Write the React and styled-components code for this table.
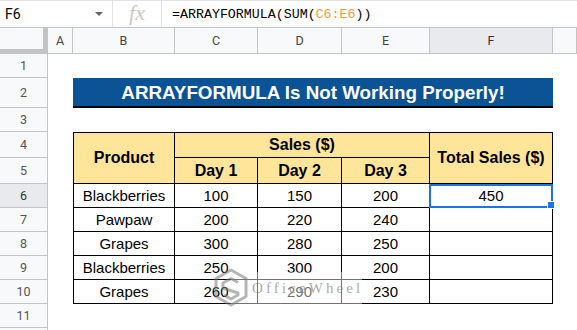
import React from 'react';
import styled, { createGlobalStyle } from 'styled-components';

const Global = createGlobalStyle`
  html, body { margin: 0; padding: 0; background: #fff; }
  body { width: 577px; height: 330px; overflow: hidden; font-family: "Liberation Sans", Arial, sans-serif; }
  * { box-sizing: border-box; }
`;

const Page = styled.div`
  width: 577px;
  height: 330px;
  display: flex;
  flex-direction: column;
  overflow: hidden;
  position: relative;
  background: #fff;
`;

const FormulaBar = styled.div`
  height: 28px;
  flex: none;
  display: flex;
  align-items: stretch;
  border-top: 1px solid #e3e3e3;
  border-bottom: 1px solid #c7c7c7;
  background: #fff;
`;

const NameBox = styled.div`
  width: 113px;
  display: flex;
  align-items: center;
  justify-content: space-between;
  padding: 0 9px 0 5px;
  font: 14px Roboto, "Liberation Sans", sans-serif;
  color: #000;
  border-right: 1px solid #e3e3e3;
`;

const Caret = styled.span`
  width: 0;
  height: 0;
  border-left: 4px solid transparent;
  border-right: 4px solid transparent;
  border-top: 4px solid #5f6368;
`;

const FxBox = styled.div`
  width: 49px;
  display: flex;
  align-items: center;
  justify-content: center;
  border-right: 1px solid #e3e3e3;
  font: italic 22px "Liberation Serif", serif;
  color: #c8c8c8;
  padding-bottom: 3px;
`;

const FormulaText = styled.div`
  padding-left: 10px;
  display: flex;
  align-items: center;
  font: 13.3px "Liberation Mono", monospace;
  color: #000;
  white-space: pre;
`;

const Ref = styled.span`
  color: #f29d38;
`;

const Sheet = styled.div`
  display: grid;
  grid-template-columns: 48px 25px 102px 83px 84px 88px 123px 1fr;
  grid-template-rows: 26px 24px 30px 24px 26px 26px repeat(6, 24px) 1fr;
  flex: 1;
`;

const Corner = styled.div`
  background: #f8f9fa;
  border-right: 5px solid #c4c4c4;
  border-bottom: 5px solid #c4c4c4;
`;

const ColHead = styled.div`
  background: ${p => (p.$active ? '#e8eaed' : '#f8f9fa')};
  border-right: 1px solid #c4c4c4;
  border-bottom: 1px solid #c4c4c4;
  display: flex;
  align-items: center;
  justify-content: center;
  font: 12.5px Roboto, "Liberation Sans", sans-serif;
  color: ${p => (p.$active ? '#333' : '#444')};
`;

const RowHead = styled.div`
  grid-column: 1;
  grid-row: ${p => p.$row + 1};
  background: ${p => (p.$active ? '#e8eaed' : '#f8f9fa')};
  border-right: 1px solid #c4c4c4;
  border-bottom: ${p => (p.$last ? 'none' : '1px solid #c4c4c4')};
  display: flex;
  align-items: center;
  justify-content: center;
  font: 12.5px Roboto, "Liberation Sans", sans-serif;
  color: ${p => (p.$active ? '#333' : '#555')};
`;

const Title = styled.div`
  grid-column: 3 / 8;
  grid-row: 3;
  background: #0b5394;
  border-bottom: 2px solid #000;
  color: #fff;
  font: bold 18.8px "Liberation Sans", Arial, sans-serif;
  display: flex;
  align-items: center;
  justify-content: center;
  padding-top: 1px;
`;

const Table = styled.div`
  grid-column: 3 / 8;
  grid-row: 5 / 12;
  display: grid;
  grid-template-columns: 101px 83px 84px 88px 123px;
  grid-template-rows: 25px 26px repeat(5, 24px);
  border-top: 1px solid #000;
  border-left: 1px solid #000;
`;

const Cell = styled.div`
  position: relative;
  border-right: 1px solid #000;
  border-bottom: 1px solid #000;
  display: flex;
  align-items: center;
  justify-content: center;
  color: #000;
  font: 15px "Liberation Sans", Arial, sans-serif;
  background: #fff;
`;

const HeadCell = styled(Cell)`
  background: #ffe599;
  font: bold 16px "Liberation Sans", Arial, sans-serif;
  grid-column: ${p => p.$col};
  grid-row: ${p => p.$row};
`;

const Selection = styled.div`
  position: absolute;
  top: 0;
  left: -1px;
  right: -1px;
  bottom: -1px;
  border: 2px solid #1a73e8;
  z-index: 2;
`;

const Handle = styled.div`
  position: absolute;
  right: -4px;
  bottom: -3px;
  width: 8px;
  height: 8px;
  background: #1a73e8;
  border: 1px solid #fff;
`;

const Watermark = styled.div`
  position: absolute;
  left: 231px;
  top: 272px;
  width: 131px;
  height: 32px;
  background: rgba(255, 255, 255, 0.45);
  display: flex;
  align-items: center;
  padding-left: 21px;
  font: 15px "Liberation Serif", serif;
  letter-spacing: 3.1px;
  color: rgba(110, 110, 110, 0.6);
  z-index: 3;
`;

const Logo = styled.svg`
  position: absolute;
  left: -19px;
  top: -5px;
`;

const columns = ['A', 'B', 'C', 'D', 'E', 'F', ''];
const rows = [
  ['Blackberries', 100, 150, 200, 450],
  ['Pawpaw', 200, 220, 240, ''],
  ['Grapes', 300, 280, 250, ''],
  ['Blackberries', 250, 300, 200, ''],
  ['Grapes', 260, 290, 230, ''],
];

export default function App() {
  return (
    <>
      <Global />
      <Page>
        <FormulaBar>
          <NameBox>
            <span>F6</span>
            <Caret />
          </NameBox>
          <FxBox>fx</FxBox>
          <FormulaText>
            =ARRAYFORMULA(SUM(<Ref>C6:E6</Ref>))
          </FormulaText>
        </FormulaBar>
        <Sheet>
          <Corner />
          {columns.map((c, i) => (
            <ColHead key={i} $active={c === 'F'}>{c}</ColHead>
          ))}
          {Array.from({ length: 11 }, (_, i) => (
            <RowHead key={i} $row={i + 1} $active={i + 1 === 6}>{i + 1}</RowHead>
          ))}
          <RowHead $row={12} $last />
          <Title>ARRAYFORMULA Is Not Working Properly!</Title>
          <Table>
            <HeadCell $col="1" $row="1 / 3">Product</HeadCell>
            <HeadCell $col="2 / 5" $row="1">Sales ($)</HeadCell>
            <HeadCell $col="5" $row="1 / 3">Total Sales ($)</HeadCell>
            <HeadCell $col="2" $row="2">Day 1</HeadCell>
            <HeadCell $col="3" $row="2">Day 2</HeadCell>
            <HeadCell $col="4" $row="2">Day 3</HeadCell>
            {rows.map((r, ri) =>
              r.map((v, ci) => (
                <Cell key={`${ri}-${ci}`}>
                  {v}
                  {ri === 0 && ci === 4 && (
                    <Selection>
                      <Handle />
                    </Selection>
                  )}
                </Cell>
              ))
            )}
          </Table>
        </Sheet>
        <Watermark>
          <Logo width="38" height="42" viewBox="0 0 38 42">
            <g fill="none" stroke="rgba(120,120,120,0.55)" strokeWidth="3" strokeLinejoin="round">
              <path d="M19 3 L34 11.5 L34 29.5 L19 38 L4 29.5 L4 11.5 Z" />
              <path d="M26 15.5 L19 11.5 L11 16 L11 21 L26 26 L26 28 L19 32 L12 28" />
            </g>
          </Logo>
          OfficeWheel
        </Watermark>
      </Page>
    </>
  );
}
